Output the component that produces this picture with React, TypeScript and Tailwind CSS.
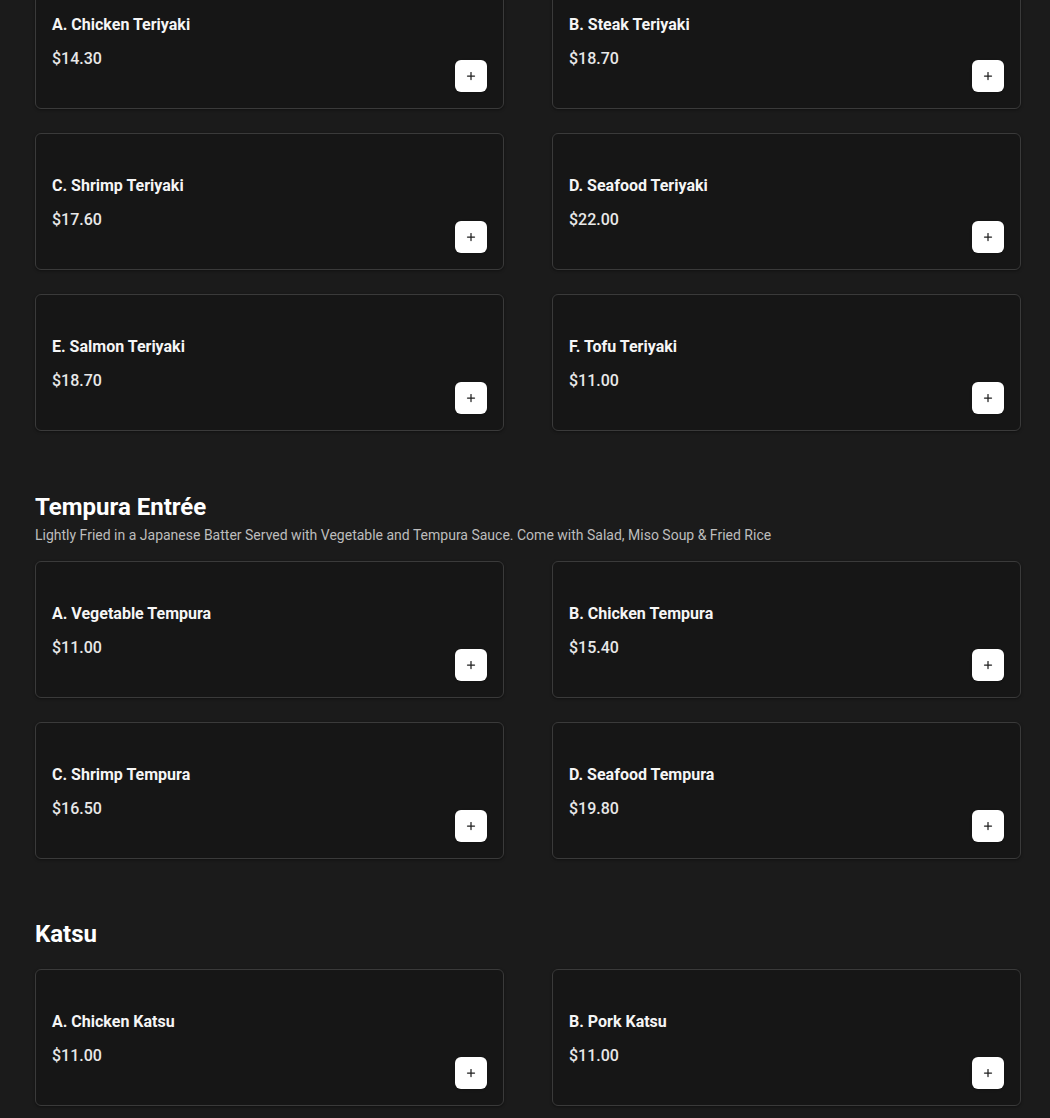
import { Plus } from "lucide-react"

type Item = { name: string; price: string }

const teriyaki: Item[] = [
  { name: "A. Chicken Teriyaki", price: "$14.30" },
  { name: "B. Steak Teriyaki", price: "$18.70" },
  { name: "C. Shrimp Teriyaki", price: "$17.60" },
  { name: "D. Seafood Teriyaki", price: "$22.00" },
  { name: "E. Salmon Teriyaki", price: "$18.70" },
  { name: "F. Tofu Teriyaki", price: "$11.00" },
]

const tempura: Item[] = [
  { name: "A. Vegetable Tempura", price: "$11.00" },
  { name: "B. Chicken Tempura", price: "$15.40" },
  { name: "C. Shrimp Tempura", price: "$16.50" },
  { name: "D. Seafood Tempura", price: "$19.80" },
]

const katsu: Item[] = [
  { name: "A. Chicken Katsu", price: "$11.00" },
  { name: "B. Pork Katsu", price: "$11.00" },
]

function ItemCard({ item }: { item: Item }) {
  return (
    <div className="flex justify-between rounded-md border border-[#3a3a3a] bg-[#161616] p-4 shadow-[0_1px_3px_rgba(0,0,0,0.4)]">
      <div className="pt-6 pb-[21px]">
        <h3 className="text-base leading-6 font-bold text-[#f5f5f5]">{item.name}</h3>
        <p className="mt-2.5 text-base leading-6 font-medium text-[#e8e8e8]">{item.price}</p>
      </div>
      <button className="flex h-8 w-8 items-center justify-center self-end rounded-md bg-white text-[#1f1f1f] shadow-sm">
        <Plus size={12} strokeWidth={2.5} />
      </button>
    </div>
  )
}

function ItemGrid({ items }: { items: Item[] }) {
  return (
    <div className="grid grid-cols-2 gap-x-12 gap-y-6">
      {items.map((item, index) => (
        <ItemCard key={index} item={item} />
      ))}
    </div>
  )
}

export default function App() {
  return (
    <div
      className="min-h-screen overflow-hidden bg-[#1b1b1b] pl-[35px]"
      style={{ fontFamily: "Roboto, 'Liberation Sans', sans-serif" }}
    >
      <div className="w-[986px] pb-10">
        {/* Teriyaki (scrolled) */}
        <div className="-mt-[28px]">
          <ItemGrid items={teriyaki} />
        </div>

        {/* Tempura */}
        <div className="mt-[60px]">
          <h2 className="text-2xl leading-8 font-bold text-white">Tempura Entrée</h2>
          <p className="mt-0.5 text-sm leading-5 text-[#bdbdbd]">
            Lightly Fried in a Japanese Batter Served with Vegetable and Tempura Sauce. Come with Salad, Miso Soup &amp; Fried Rice
          </p>
          <div className="mt-4">
            <ItemGrid items={tempura} />
          </div>
        </div>

        {/* Katsu */}
        <div className="mt-[59px]">
          <h2 className="text-2xl leading-8 font-bold text-white">Katsu</h2>
          <div className="mt-[19px]">
            <ItemGrid items={katsu} />
          </div>
        </div>
      </div>
    </div>
  )
}
